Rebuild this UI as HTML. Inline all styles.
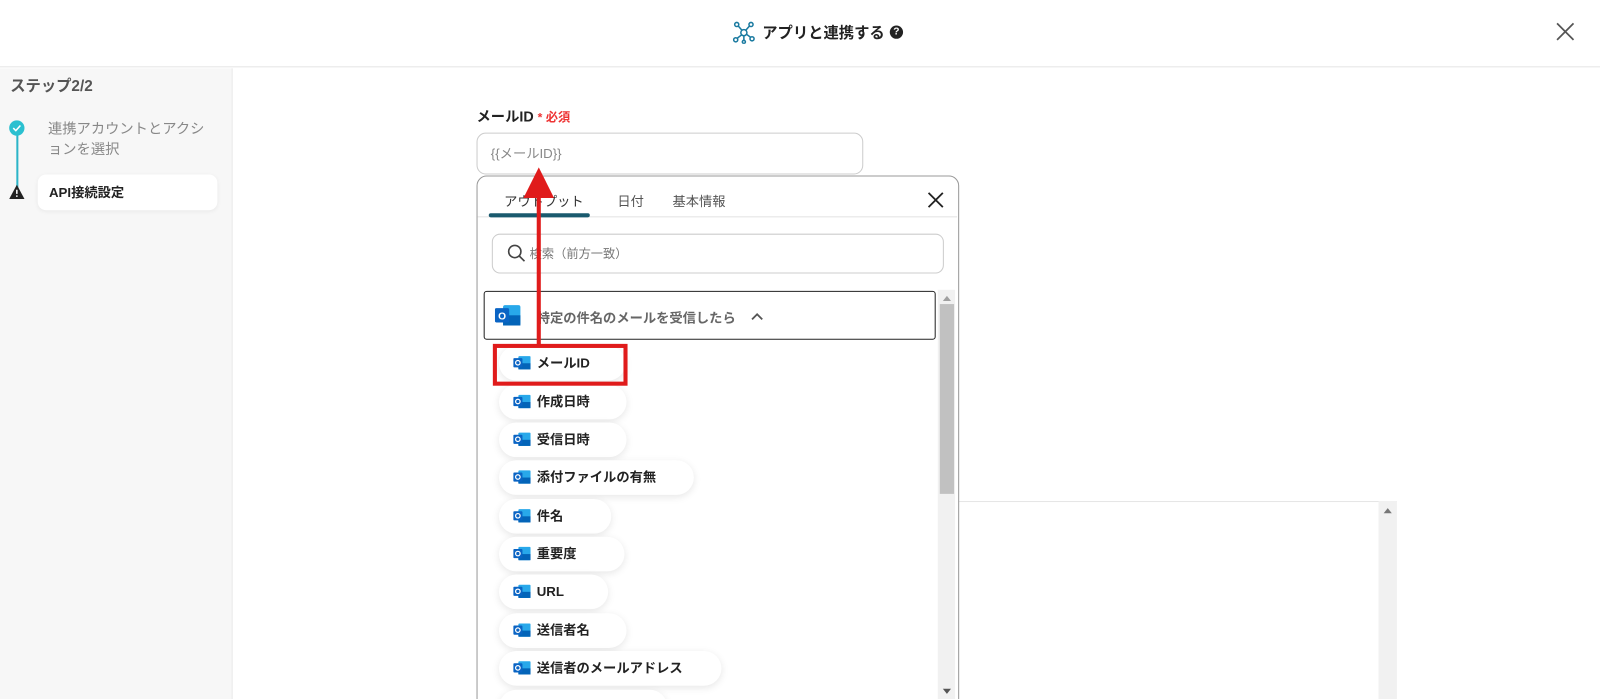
<!DOCTYPE html>
<html><head><meta charset="utf-8">
<style>
*{box-sizing:border-box;margin:0;padding:0}
html,body{width:1600px;height:699px;overflow:hidden;background:#fff}
body{font-family:"Liberation Sans","Noto Sans CJK JP",sans-serif;position:relative;color:#222}
#w{position:absolute;left:0;top:0;width:1569px;height:700px;transform:scale(1.0204);transform-origin:0 0;overflow:hidden}
.a{position:absolute}
.pill{position:absolute;left:489px;height:34px;border-radius:17px;background:#fff;box-shadow:0 2px 8px rgba(0,0,0,0.10);font-size:13px;font-weight:bold;line-height:34px;padding-left:37px;color:#222}
</style></head><body><div id="w">
<div class="a" style="left:0;top:0;width:1569px;height:66px;border-bottom:1px solid #e4e4e4;background:#fff"></div>
<svg class="a" style="left:718px;top:21px" width="22" height="22" viewBox="0 0 22 22" fill="none" stroke="#1a7aa0" stroke-width="1.5"><circle cx="11" cy="11" r="3"/><circle cx="4" cy="3" r="2"/><circle cx="18" cy="3" r="2"/><circle cx="3" cy="18" r="2"/><circle cx="19" cy="17" r="2"/><circle cx="11" cy="20" r="1.5"/><path d="M5.5 4.5 9 8.5M16.5 4.5 13 8.5M4.5 16.5 9 13M17.5 15.5 13.5 12.5M11 14v4.5"/></svg>
<div class="a" style="left:747px;top:21px;font-size:15px;font-weight:bold;color:#222">アプリと連携する</div>
<div class="a" style="left:872px;top:25px;width:13px;height:13px;border-radius:50%;background:#222;color:#fff;font-size:10px;font-weight:bold;text-align:center;line-height:13px">?</div>
<svg class="a" style="left:1525px;top:22px" width="18" height="18" viewBox="0 0 19 19" stroke="#555" stroke-width="1.8"><path d="M1 1 18 18M18 1 1 18"/></svg>
<div class="a" style="left:0;top:67px;width:228px;height:640px;background:#f7f7f7;border-right:1px solid #e8e8e8"></div>
<div class="a" style="left:10px;top:73px;font-size:15px;font-weight:bold;color:#555">ステップ2/2</div>
<div class="a" style="left:16px;top:126px;width:2px;height:60px;background:#2bb5c8"></div>
<div class="a" style="left:9px;top:118px;width:15px;height:15px;border-radius:50%;background:#2bc0d0"></div>
<svg class="a" style="left:12px;top:122px" width="9" height="7" viewBox="0 0 9 7" fill="none" stroke="#fff" stroke-width="1.5"><path d="M1 3.5 3.5 6 8 1"/></svg>
<div class="a" style="left:47px;top:116px;font-size:14px;color:#888;line-height:20px;width:160px">連携アカウントとアクションを選択</div>
<svg class="a" style="left:9px;top:181px" width="15" height="14" viewBox="0 0 15 14"><path d="M7.5 0 15 14H0Z" fill="#222"/><path d="M7.5 5v4M7.5 10.5v1.5" stroke="#fff" stroke-width="1.5"/></svg>
<div class="a" style="left:37px;top:171px;width:176px;height:35px;background:#fff;border-radius:8px;box-shadow:0 1px 4px rgba(0,0,0,0.06);font-size:13px;font-weight:bold;line-height:35px;padding-left:11px">API接続設定</div>
<div class="a" style="left:467px;top:104px;font-size:14px;font-weight:bold">メールID <span style="color:#e33;font-size:12px">* 必須</span></div>
<div class="a" style="left:467px;top:130px;width:379px;height:41px;border:1px solid #ccc;border-radius:9px;font-size:13px;color:#888;line-height:40px;padding-left:13px">{{メールID}}</div>
<div class="a" style="left:938px;top:491px;width:431px;height:220px;border:1px solid #e6e6e6;border-right:none;background:#fff"></div>
<div class="a" style="left:1351px;top:491px;width:18px;height:220px;background:#f1f1f1"></div>
<div class="a" style="left:1356px;top:498px;width:0;height:0;border-left:4px solid transparent;border-right:4px solid transparent;border-bottom:5px solid #777"></div>
<div class="a" style="left:467px;top:172px;width:473px;height:540px;border:1px solid #999;border-radius:10px;background:#fff"></div>
<div class="a" style="left:468px;top:212px;width:470px;height:1px;background:#e2e2e2"></div>
<div class="a" style="left:479px;top:209px;width:99px;height:4px;border-radius:2px;background:#1a5a6e"></div>
<div class="a" style="left:494px;top:187px;font-size:13px;color:#333">アウトプット</div>
<div class="a" style="left:605px;top:187px;font-size:13px;color:#555">日付</div>
<div class="a" style="left:659px;top:187px;font-size:13px;color:#555">基本情報</div>
<svg class="a" style="left:909px;top:188px" width="16" height="16" viewBox="0 0 16 16" stroke="#222" stroke-width="1.8"><path d="M1 1 15 15M15 1 1 15"/></svg>
<div class="a" style="left:482px;top:229px;width:443px;height:39px;border:1px solid #ccc;border-radius:8px"></div>
<svg class="a" style="left:497px;top:239px" width="18" height="18" viewBox="0 0 18 18" fill="none" stroke="#444" stroke-width="1.6"><circle cx="7.5" cy="7.5" r="6"/><path d="M12 12 17 17"/></svg>
<div class="a" style="left:519px;top:240px;font-size:12px;color:#777">検索（前方一致）</div>
<div class="a" style="left:919px;top:284px;width:17px;height:402px;background:#f1f1f1"></div>
<div class="a" style="left:921px;top:298px;width:14px;height:186px;background:#c1c1c1"></div>
<div class="a" style="left:924px;top:290px;border-left:4px solid transparent;border-right:4px solid transparent;border-bottom:5px solid #a0a0a0"></div>
<div class="a" style="left:924px;top:675px;border-left:4px solid transparent;border-right:4px solid transparent;border-top:5px solid #555"></div>
<div class="a" style="left:474px;top:285px;width:443px;height:48px;border:1.5px solid #222;border-radius:3px"></div>
<svg class="a" style="left:485px;top:297px" width="26" height="24" viewBox="0 0 26 24"><rect x="8" y="2" width="17" height="20" rx="2" fill="#28a8ea"/><rect x="8" y="12" width="17" height="10" fill="#0364b8"/><rect x="0" y="5" width="14" height="14" rx="1.5" fill="#0a64c4"/><text x="7" y="16" font-size="10" font-weight="bold" fill="#fff" text-anchor="middle" font-family="Liberation Sans">O</text></svg>
<div class="a" style="left:526px;top:301px;font-size:13px;font-weight:bold;color:#666">特定の件名のメールを受信したら</div>
<svg class="a" style="left:736px;top:306px" width="12" height="8" viewBox="0 0 12 8" fill="none" stroke="#555" stroke-width="1.8"><path d="M1 7 6 2 11 7"/></svg>
<div class="pill" style="top:339px;width:124px">メールID</div>
<div class="pill" style="top:377px;width:125px">作成日時</div>
<div class="pill" style="top:414px;width:125px">受信日時</div>
<div class="pill" style="top:451px;width:191px">添付ファイルの有無</div>
<div class="pill" style="top:489px;width:110px">件名</div>
<div class="pill" style="top:526px;width:123px">重要度</div>
<div class="pill" style="top:563px;width:107px">URL</div>
<div class="pill" style="top:601px;width:125px">送信者名</div>
<div class="pill" style="top:638px;width:218px">送信者のメールアドレス</div>
<div class="pill" style="top:676px;width:165px"></div>
<div class="a" style="left:503px;top:348px"><svg width="17" height="15" viewBox="0 0 17 15"><rect x="5" y="1" width="12" height="13" rx="1" fill="#28a8ea"/><rect x="5" y="8" width="12" height="6" fill="#0364b8"/><rect x="0" y="3" width="9" height="9" rx="1" fill="#0a64c4"/><circle cx="4.5" cy="7.5" r="2.2" fill="none" stroke="#fff" stroke-width="1.2"/></svg></div>
<div class="a" style="left:503px;top:386px"><svg width="17" height="15" viewBox="0 0 17 15"><rect x="5" y="1" width="12" height="13" rx="1" fill="#28a8ea"/><rect x="5" y="8" width="12" height="6" fill="#0364b8"/><rect x="0" y="3" width="9" height="9" rx="1" fill="#0a64c4"/><circle cx="4.5" cy="7.5" r="2.2" fill="none" stroke="#fff" stroke-width="1.2"/></svg></div>
<div class="a" style="left:503px;top:423px"><svg width="17" height="15" viewBox="0 0 17 15"><rect x="5" y="1" width="12" height="13" rx="1" fill="#28a8ea"/><rect x="5" y="8" width="12" height="6" fill="#0364b8"/><rect x="0" y="3" width="9" height="9" rx="1" fill="#0a64c4"/><circle cx="4.5" cy="7.5" r="2.2" fill="none" stroke="#fff" stroke-width="1.2"/></svg></div>
<div class="a" style="left:503px;top:460px"><svg width="17" height="15" viewBox="0 0 17 15"><rect x="5" y="1" width="12" height="13" rx="1" fill="#28a8ea"/><rect x="5" y="8" width="12" height="6" fill="#0364b8"/><rect x="0" y="3" width="9" height="9" rx="1" fill="#0a64c4"/><circle cx="4.5" cy="7.5" r="2.2" fill="none" stroke="#fff" stroke-width="1.2"/></svg></div>
<div class="a" style="left:503px;top:498px"><svg width="17" height="15" viewBox="0 0 17 15"><rect x="5" y="1" width="12" height="13" rx="1" fill="#28a8ea"/><rect x="5" y="8" width="12" height="6" fill="#0364b8"/><rect x="0" y="3" width="9" height="9" rx="1" fill="#0a64c4"/><circle cx="4.5" cy="7.5" r="2.2" fill="none" stroke="#fff" stroke-width="1.2"/></svg></div>
<div class="a" style="left:503px;top:535px"><svg width="17" height="15" viewBox="0 0 17 15"><rect x="5" y="1" width="12" height="13" rx="1" fill="#28a8ea"/><rect x="5" y="8" width="12" height="6" fill="#0364b8"/><rect x="0" y="3" width="9" height="9" rx="1" fill="#0a64c4"/><circle cx="4.5" cy="7.5" r="2.2" fill="none" stroke="#fff" stroke-width="1.2"/></svg></div>
<div class="a" style="left:503px;top:572px"><svg width="17" height="15" viewBox="0 0 17 15"><rect x="5" y="1" width="12" height="13" rx="1" fill="#28a8ea"/><rect x="5" y="8" width="12" height="6" fill="#0364b8"/><rect x="0" y="3" width="9" height="9" rx="1" fill="#0a64c4"/><circle cx="4.5" cy="7.5" r="2.2" fill="none" stroke="#fff" stroke-width="1.2"/></svg></div>
<div class="a" style="left:503px;top:610px"><svg width="17" height="15" viewBox="0 0 17 15"><rect x="5" y="1" width="12" height="13" rx="1" fill="#28a8ea"/><rect x="5" y="8" width="12" height="6" fill="#0364b8"/><rect x="0" y="3" width="9" height="9" rx="1" fill="#0a64c4"/><circle cx="4.5" cy="7.5" r="2.2" fill="none" stroke="#fff" stroke-width="1.2"/></svg></div>
<div class="a" style="left:503px;top:647px"><svg width="17" height="15" viewBox="0 0 17 15"><rect x="5" y="1" width="12" height="13" rx="1" fill="#28a8ea"/><rect x="5" y="8" width="12" height="6" fill="#0364b8"/><rect x="0" y="3" width="9" height="9" rx="1" fill="#0a64c4"/><circle cx="4.5" cy="7.5" r="2.2" fill="none" stroke="#fff" stroke-width="1.2"/></svg></div>
<div class="a" style="left:483px;top:337px;width:132px;height:41px;border:4px solid #e01b1b"></div>
<div class="a" style="left:526px;top:190px;width:4px;height:148px;background:#e01b1b"></div>
<svg class="a" style="left:513px;top:164px" width="30" height="30" viewBox="0 0 30 30"><path d="M15 0 30 30H0Z" fill="#e01b1b"/></svg>
</div></body></html>
